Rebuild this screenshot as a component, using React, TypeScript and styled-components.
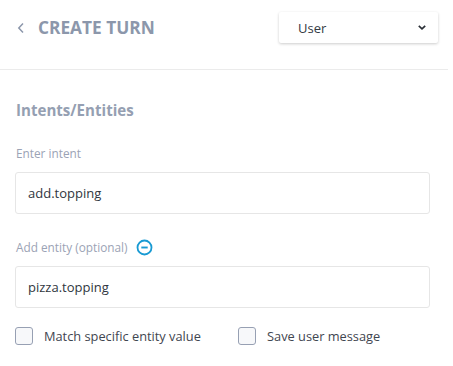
import React from "react";
import styled, { createGlobalStyle } from "styled-components";

const Global = createGlobalStyle`
  html, body { margin: 0; padding: 0; background: #ffffff; }
  body { font-family: "Open Sans", "Noto Sans", sans-serif; }
  * { box-sizing: border-box; }
`;

const Panel = styled.div`
  width: 448px;
  background: #fff;
`;

const Header = styled.header`
  height: 70px;
  display: flex;
  align-items: flex-start;
  justify-content: space-between;
  border-bottom: 1px solid #ebebeb;
  padding: 12px 10px 0 17px;
`;

const TitleRow = styled.div`
  display: flex;
  align-items: center;
  gap: 13px;
  height: 31px;
`;

const Back = styled.svg`
  width: 8px;
  height: 12px;
  margin-top: 1px;
`;

const Title = styled.h1`
  margin: 0;
  font-size: 17.3px;
  font-weight: 700;
  color: #8c97ab;
  line-height: 31px;
`;

const Select = styled.div`
  width: 159px;
  height: 31px;
  display: flex;
  align-items: center;
  justify-content: space-between;
  padding: 0 11px 0 19px;
  background: #fff;
  border-radius: 2px;
  box-shadow: 0 1px 3px rgba(0, 0, 0, 0.2);
  font-size: 13px;
  color: #333a44;
`;

const Content = styled.section`
  padding: 26px 18px 0 15px;
`;

const Heading = styled.h2`
  margin: 0 0 0 1px;
  font-size: 15.1px;
  font-weight: 700;
  color: #959fb2;
  line-height: 29px;
`;

const FieldLabel = styled.div<{ $top: number }>`
  display: flex;
  align-items: center;
  gap: 8px;
  margin: ${(p) => p.$top}px 0 0 1px;
  height: 20px;
  font-size: 11.8px;
  color: #9ba3b5;
`;

const Input = styled.div`
  margin-top: 9px;
  height: 42px;
  border: 1px solid #e6e6e6;
  border-radius: 3px;
  display: flex;
  align-items: center;
  padding: 0 12px;
  font-size: 13px;
  color: #2f3640;
`;

const CheckRow = styled.div`
  display: flex;
  align-items: center;
  margin-top: 19px;
`;

const Check = styled.label<{ $w?: number }>`
  display: flex;
  align-items: center;
  gap: 11px;
  font-size: 12.8px;
  color: #3f4650;
  width: ${(p) => (p.$w ? p.$w + "px" : "auto")};
`;

const Box = styled.span`
  width: 18px;
  height: 18px;
  border: 1px solid #97a0b3;
  border-radius: 3px;
  background: #f7f8fa;
`;

export default function App() {
  return (
    <>
      <Global />
      <Panel>
        <Header>
          <TitleRow>
            <Back viewBox="0 0 8 12">
              <path d="M6 1.5 L1.8 6 L6 10.5" fill="none" stroke="#8c97ab" strokeWidth="1.5" />
            </Back>
            <Title>CREATE TURN</Title>
          </TitleRow>
          <Select>
            <span>User</span>
            <svg width="10" height="7" viewBox="0 0 10 7">
              <path d="M1.8 1.8 L5 4.8 L8.2 1.8" fill="none" stroke="#2a2f36" strokeWidth="1.7" />
            </svg>
          </Select>
        </Header>
        <Content>
          <Heading>Intents/Entities</Heading>
          <FieldLabel $top={18}>Enter intent</FieldLabel>
          <Input>add.topping</Input>
          <FieldLabel $top={23}>
            Add entity (optional)
            <svg width="17" height="17" viewBox="0 0 17 17">
              <circle cx="8.5" cy="8.5" r="7" fill="none" stroke="#189ad3" strokeWidth="1.8" />
              <path d="M5.3 8.5 H11.7" stroke="#189ad3" strokeWidth="1.9" />
            </svg>
          </FieldLabel>
          <Input>pizza.topping</Input>
          <CheckRow>
            <Check $w={223}>
              <Box />
              Match specific entity value
            </Check>
            <Check>
              <Box />
              Save user message
            </Check>
          </CheckRow>
        </Content>
      </Panel>
    </>
  );
}
